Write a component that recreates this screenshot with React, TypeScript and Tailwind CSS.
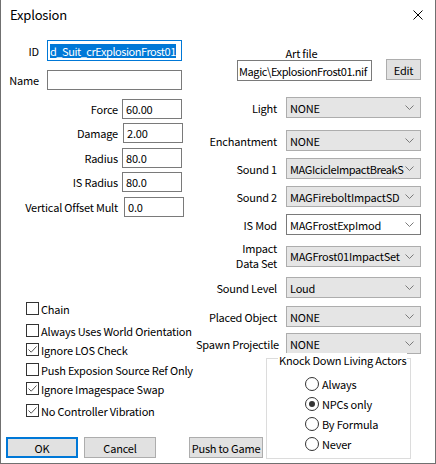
import type { ReactNode } from 'react';

const Chevron = () => (
  <svg width="9" height="5" viewBox="0 0 9 5" className="shrink-0">
    <path d="M0.5 0.5 L4.5 4.5 L8.5 0.5" fill="none" stroke="#7a7a7a" strokeWidth="1" />
  </svg>
);

const Combo = ({ value, editable = false, valueClass = '' }: { value: string; editable?: boolean; valueClass?: string }) => (
  <div
    className={`ml-[9px] w-[135px] h-[21px] flex items-center pl-[3px] pr-[6px] border overflow-hidden ${
      editable ? 'bg-white border-[#7a7a7a]' : 'bg-[#e5e5e5] border-[#adadad]'
    }`}
  >
    <span className={`flex-1 whitespace-nowrap overflow-hidden ${valueClass}`}>{value}</span>
    <Chevron />
  </div>
);

const ComboRow = ({
  label,
  value,
  className = '',
  editable,
  valueClass,
}: {
  label: ReactNode;
  value: string;
  className?: string;
  editable?: boolean;
  valueClass?: string;
}) => (
  <div className={`flex items-center ${className}`}>
    <div className="w-[81px] text-right whitespace-nowrap">{label}</div>
    <Combo value={value} editable={editable} valueClass={valueClass} />
  </div>
);

const NumRow = ({ label, value, className = '', inputClass = 'ml-[4px]' }: { label: string; value: string; className?: string; inputClass?: string }) => (
  <div className={`flex items-center h-[20px] ${className}`}>
    <div className="w-[117px] text-right whitespace-nowrap">{label}</div>
    <div className={`${inputClass} w-[60px] h-[20px] border border-[#7a7a7a] bg-white flex items-center pl-[3px]`}>{value}</div>
  </div>
);

const Check = ({ label, checked = false, className = '' }: { label: string; checked?: boolean; className?: string }) => (
  <div className={`flex items-center h-[13px] pl-[25px] ${className}`}>
    <div className="w-[13px] h-[13px] border border-[#333333] bg-white flex items-center justify-center shrink-0">
      {checked && (
        <svg width="11" height="11" viewBox="0 0 11 11">
          <path d="M1.5 5.5 L4.2 8.2 L9.5 2.5" fill="none" stroke="#555555" strokeWidth="1" />
        </svg>
      )}
    </div>
    <span className="ml-[2px] whitespace-nowrap">{label}</span>
  </div>
);

const Radio = ({ label, checked = false }: { label: string; checked?: boolean }) => (
  <div className="flex items-center h-[20px]">
    <div className="w-[14px] h-[14px] rounded-full border border-[#333333] bg-white flex items-center justify-center shrink-0">
      {checked && <div className="w-[6px] h-[6px] rounded-full bg-[#333333]" />}
    </div>
    <span className="ml-[3px] whitespace-nowrap">{label}</span>
  </div>
);

const Button = ({ children, className = '', primary = false }: { children: ReactNode; className?: string; primary?: boolean }) => (
  <div
    className={`h-[21px] flex items-center justify-center whitespace-nowrap bg-[#e1e1e1] ${
      primary ? 'border-2 border-[#0078d7]' : 'border border-[#adadad]'
    } ${className}`}
  >
    {children}
  </div>
);

export default function App() {
  return (
    <div className="w-[436px] h-[464px] bg-white border-x border-b border-[#707070] text-[11px] tracking-[-0.2px] text-black font-['Noto_Sans_CJK_SC','Noto_Sans',sans-serif] leading-[14px] overflow-hidden">
      {/* Title bar */}
      <div className="h-[30px] flex items-center pl-[9px] pr-[12px]">
        <span className="text-[13px] flex-1">Explosion</span>
        <svg width="10" height="10" viewBox="0 0 10 10">
          <path d="M0.5 0.5 L9.5 9.5 M9.5 0.5 L0.5 9.5" stroke="#000" strokeWidth="1" />
        </svg>
      </div>

      <div className="flex">
        {/* Left column */}
        <div className="w-[195px] shrink-0 flex flex-col">
          <div className="flex items-center h-[21px] mt-[10px]">
            <div className="w-[38px] text-right">ID</div>
            <div className="ml-[8px] w-[135px] h-[21px] border border-[#0078d7] bg-white flex items-center pl-[2px] overflow-hidden">
              <span className="bg-[#0078d7] text-white whitespace-nowrap tracking-[-0.45px]">d_Suit_crExplosionFrost01</span>
            </div>
          </div>
          <div className="flex items-center h-[20px] mt-[9px]">
            <div className="w-[38px] text-right">Name</div>
            <div className="ml-[8px] w-[135px] h-[20px] border border-[#7a7a7a] bg-white" />
          </div>

          <NumRow label="Force" value="60.00" className="mt-[9px]" />
          <NumRow label="Damage" value="2.00" className="mt-[4px]" inputClass="ml-[5px]" />
          <NumRow label="Radius" value="80.0" className="mt-[5px]" />
          <NumRow label="IS Radius" value="80.0" className="mt-[4px]" />
          <NumRow label="Vertical Offset Mult" value="0.0" className="mt-[5px]" inputClass="ml-[6px]" />

          <Check label="Chain" className="mt-[85px]" />
          <Check label="Always Uses World Orientation" className="mt-[9px]" />
          <Check label="Ignore LOS Check" checked className="mt-[6px]" />
          <Check label="Push Exposion Source Ref Only" className="mt-[7px]" />
          <Check label="Ignore Imagespace Swap" checked className="mt-[6px]" />
          <Check label="No Controller Vibration" checked className="mt-[9px]" />

          <div className="flex mt-[20px] pl-[5px] w-[300px]">
            <Button primary className="w-[72px]">OK</Button>
            <Button className="w-[72px] ml-[6px]">Cancel</Button>
            <Button className="w-[74px] ml-[33px]">Push to Game</Button>
          </div>
        </div>

        {/* Right column */}
        <div className="flex-1 flex flex-col">
          <div className="flex items-end mt-[16px]">
            <div className="ml-[41px] flex flex-col items-center">
              <span className="h-[14px] -ml-[6px]">Art file</span>
              <div className="w-[135px] h-[21px] border border-[#7a7a7a] bg-white flex items-center pl-[1px] overflow-hidden whitespace-nowrap tracking-[-0.4px]">
                Magic\ExplosionFrost01.nif
              </div>
            </div>
            <Button className="w-[35px] h-[20px] ml-[14px] mb-[1px]">Edit</Button>
          </div>

          <ComboRow label="Light" value="NONE" className="mt-[16px]" />
          <ComboRow label="Enchantment" value="NONE" className="mt-[12px]" />
          <ComboRow label="Sound 1" value="MAGIcicleImpactBreakS" className="mt-[7px]" valueClass="tracking-[-0.4px]" />
          <ComboRow label="Sound 2" value="MAGFireboltImpactSD" className="mt-[7px]" />
          <ComboRow label="IS Mod" value="MAGFrostExpImod" className="mt-[7px]" editable />
          <ComboRow
            label={
              <span className="block leading-[15px]">
                Impact
                <br />
                Data Set
              </span>
            }
            value="MAGFrost01ImpactSet"
            className="mt-[6px]"
          />
          <ComboRow label="Sound Level" value="Loud" className="mt-[6px]" />
          <ComboRow label="Placed Object" value="NONE" className="mt-[8px]" />
          <ComboRow label="Spawn Projectile" value="NONE" className="mt-[6px]" />

          {/* Knock down group */}
          <div className="relative ml-[70px] mt-[4px] w-[145px] h-[101px] border border-[#dcdcdc] pt-[15px] pl-[38px]">
            <span className="absolute -top-[6px] left-[11px] px-[1px] bg-white whitespace-nowrap">Knock Down Living Actors</span>
            <Radio label="Always" />
            <Radio label="NPCs only" checked />
            <Radio label="By Formula" />
            <Radio label="Never" />
          </div>
        </div>
      </div>
    </div>
  );
}
